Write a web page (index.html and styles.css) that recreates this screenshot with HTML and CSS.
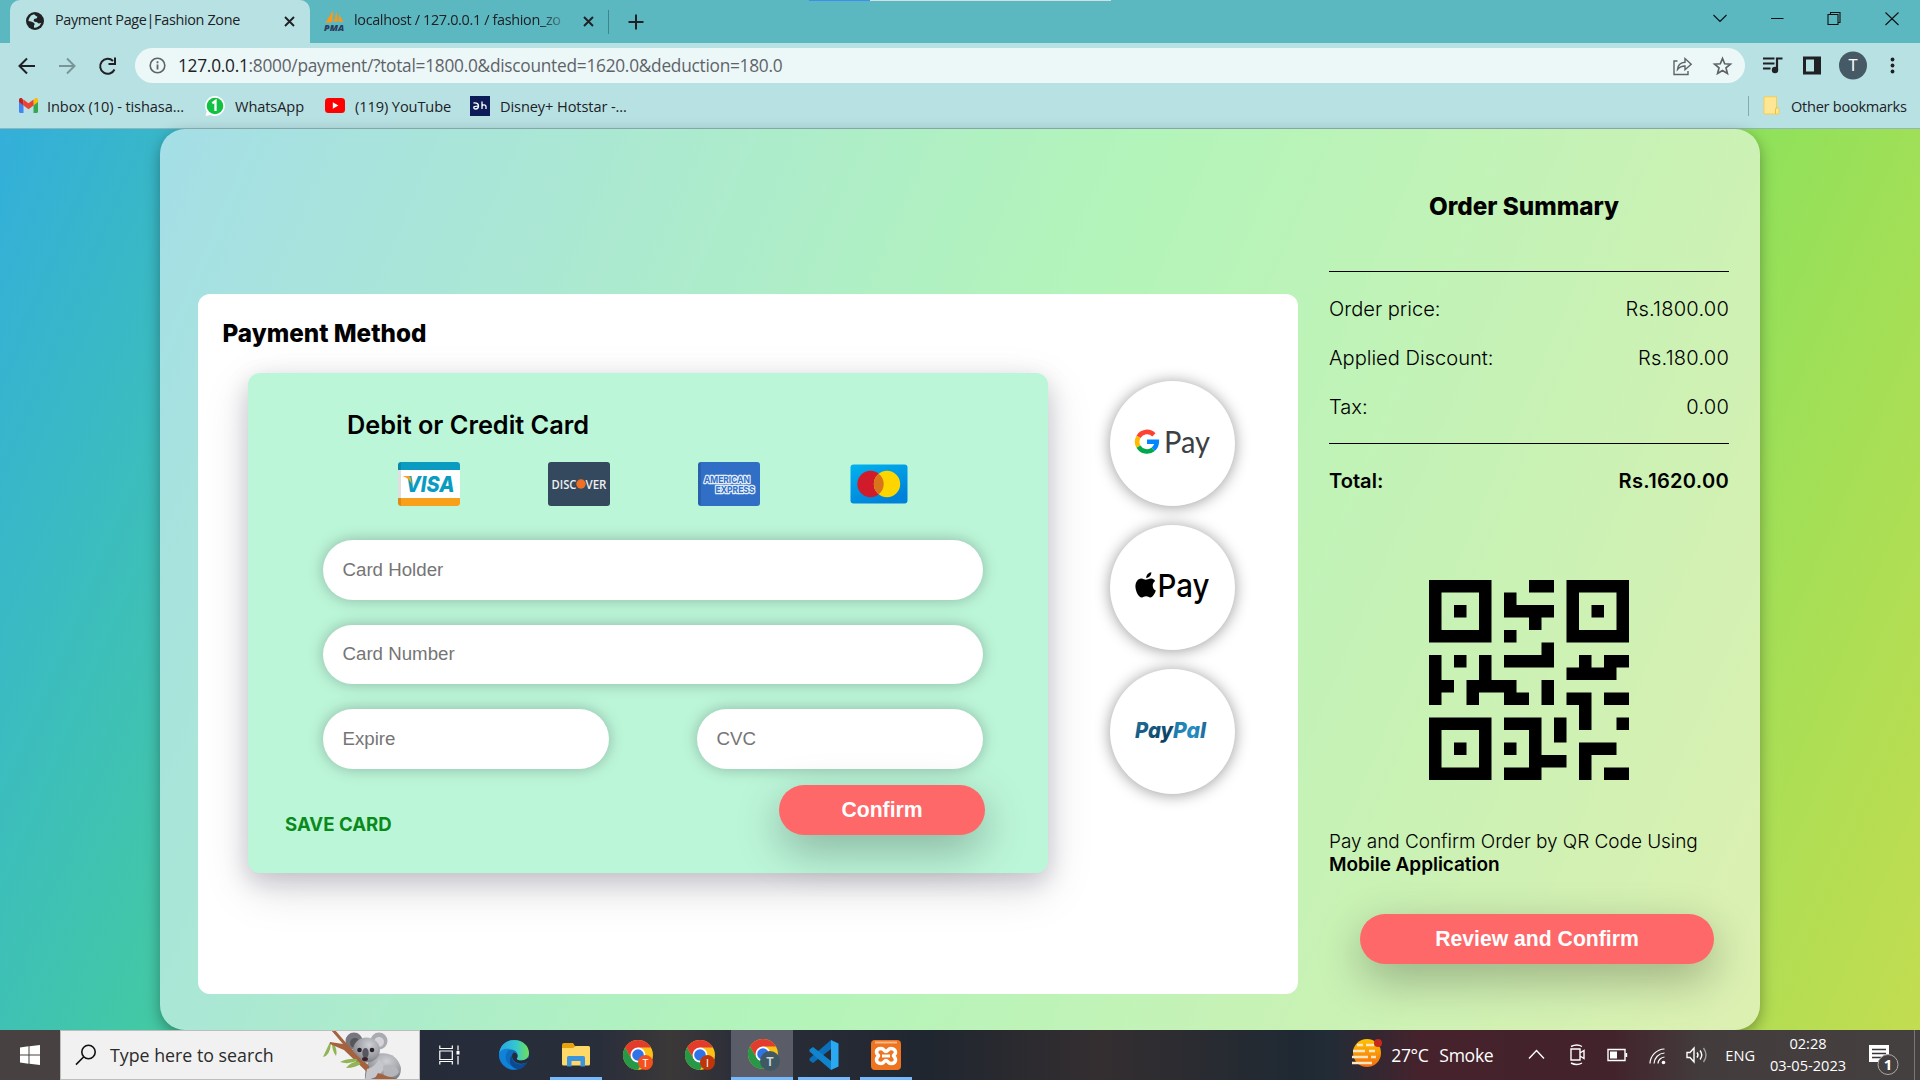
FILE: index.html
```html
<!DOCTYPE html>
<html lang="en">
<head>
<meta charset="utf-8">
<title>Payment Page|Fashion Zone</title>
<link rel="stylesheet" href="styles.css">
</head>
<body>
<header class="browser">
  <div class="tabstrip">
    <div class="tab tab-active">
      <svg class="tab-icon" width="18" height="18" viewBox="0 0 18 18"><circle cx="9" cy="9" r="9" fill="#202124"/><path d="M8 2.2 5 3.6 3 6.5 2.4 9 5 9.5 7.5 10.500 8.800 12 8 13.500 8 15.700 10.500 15.600 13.500 13.800 15.300 11 12.500 11.500 11 10.300 8.500 9.800 7.500 8.300 8.500 6.800 10.500 6.500 11.500 4.800 10 4z" fill="#b8e1e4"/></svg>
      <span class="tab-title">Payment Page|Fashion Zone</span>
      <svg class="tab-close" width="11" height="11" viewBox="0 0 11 11"><path d="M1 1l9 9M10 1l-9 9" stroke="#202124" stroke-width="1.900"/></svg>
    </div>
    <div class="tab tab-idle">
      <svg class="tab-icon" width="20" height="22" viewBox="0 0 20 22"><path d="M9 0 1.500 13 8.500 12zM12.500 1 10 12l4-.8zM15 4l-.5 7.500 5 .8z" fill="#f79a1c"/><text x="0" y="21" class="pma" textLength="20" lengthAdjust="spacingAndGlyphs">PMA</text></svg>
      <span class="tab-title tab-title-faded">localhost / 127.0.0.1 / fashion_zo</span>
      <svg class="tab-close" width="11" height="11" viewBox="0 0 11 11"><path d="M1 1l9 9M10 1l-9 9" stroke="#202124" stroke-width="1.900"/></svg>
    </div>
    <span class="tab-divider"></span>
    <svg class="tab-plus" width="16" height="16" viewBox="0 0 16 16"><path d="M8 .5v15M.5 8h15" stroke="#202124" stroke-width="2"/></svg>
    <div class="share-strip"><i></i><b></b></div>
    <svg class="window-controls" width="200" height="40" viewBox="0 0 200 40" fill="none" stroke="#111" stroke-width="1.100"><path d="M6.500 13l6.500 6.500 6.500-6.500M64 16.500h12.500M121 12.500h10v10h-10zM123.500 12.500v-2h9.500v10h-2M178.500 10.500l13 12.500M191.500 10.500l-13 12.500"/></svg>
  </div>
  <div class="toolbar">
    <svg class="nav" width="110" height="36" viewBox="0 0 110 36" fill="none" stroke="#202124" stroke-width="2"><path d="M28 18H13M20 10.500 12.500 18l7.500 7.500"/><path stroke="#7a9597" d="M52 18h15M60 10.500l7.500 7.500-7.500 7.500"/><path d="M107.500 21.500a7.500 7.500 0 1 1-1.500-8.500M108 9.500v6.500h-6.500"/></svg>
    <div class="omnibox">
      <svg width="17" height="17" viewBox="0 0 17 17" fill="none" stroke="#5f6368"><circle cx="8.500" cy="8.500" r="7.300" stroke-width="1.600"/><path d="M8.500 7.500v5M8.500 4.300v2" stroke-width="1.800"/></svg>
      <span class="url"><em>127.0.0.1</em>:8000/payment/?total=1800.0&amp;discounted=1620.0&amp;deduction=180.0</span>
      <svg class="omni-actions" width="62" height="22" viewBox="0 0 62 22" fill="none" stroke="#5f6368" stroke-width="1.400"><path d="M5.500 6H2v13.500h14V16M5.500 14.500c.5-5 3.500-7 7.500-7.200V3.500l6.200 5.700-6.200 5.500v-3.700c-3.500 0-5.500 1-7.500 3.500z"/><path stroke-width="1.700" d="M50.500 3.500l2.200 5.300 5.700.4-4.400 3.700 1.400 5.600-4.900-3-4.900 3 1.400-5.600-4.400-3.700 5.700-.4z"/></svg>
    </div>
    <svg class="extensions" width="150" height="36" viewBox="0 0 150 36"><path d="M1 10.500h11.500M1 15.500h11.500M1 20.500h7.500" stroke="#202124" stroke-width="2"/><path d="M15 22V10.500h5.500" fill="none" stroke="#202124" stroke-width="2.200"/><circle cx="13" cy="22" r="3.200" fill="#202124"/><path d="M41 8.500h18v18H41zM44 11.500v12h8v-12z" fill="#202124" fill-rule="evenodd"/><circle cx="91" cy="17.500" r="14" fill="#455a64"/><text x="91" y="23" text-anchor="middle" class="avatar">T</text><g fill="#202124"><circle cx="130.500" cy="11.500" r="1.900"/><circle cx="130.500" cy="17.500" r="1.900"/><circle cx="130.500" cy="23.500" r="1.900"/></g></svg>
  </div>
  <div class="bookmarks">
    <svg class="bm-mail" width="19" height="15" viewBox="0 0 19 15"><path d="M0 2v11.500Q0 15 1.500 15h3V5z" fill="#4285f4"/><path d="M19 2v11.500q0 1.500-1.500 1.500h-3V5z" fill="#34a853"/><path d="M14.500 2.500V7.500L19 4V2c0-2-2-2.500-3.200-1.500z" fill="#fbbc04"/><path d="M4.500 2.500V7.500L0 4V2C0 0 2-.5 3.200.5z" fill="#c5221f"/><path d="M4.500 1.500v6l5 3.800 5-3.800v-6l-5 3.800z" fill="#ea4335"/></svg>
    <span class="bm-text">Inbox (10) - tishasa...</span>
    <svg class="bm-wa" width="20" height="20" viewBox="0 0 20 20"><path d="M10 0a10 10 0 1 1-4.500 19L.5 20l1.200-4.500A10 10 0 0 1 10 0z" fill="#fff"/><circle cx="10" cy="10" r="8.300" fill="#12c143"/><path d="M7.300 7.200 10.500 5v10" fill="none" stroke="#fff" stroke-width="2.300"/></svg>
    <span class="bm-text">WhatsApp</span>
    <svg class="bm-yt" width="20" height="15" viewBox="0 0 20 15"><rect width="20" height="15" rx="3.500" fill="#f00"/><path d="M7.800 4.200v6.600l5.600-3.300z" fill="#fff"/></svg>
    <span class="bm-text">(119) YouTube</span>
    <svg class="bm-hs" width="20" height="20" viewBox="0 0 20 20"><rect width="20" height="20" fill="#0d1b57"/><path d="M3.500 7q5.500-.5 5 3.500-.5 2.500-2.700 2.500-2.300-.2-2-1.800.4-1.300 5-1M12 5.500V13M12 10.800q0-2 2-2t2 2V13" fill="none" stroke="#fff" stroke-width="1.300"/></svg>
    <span class="bm-text">Disney+ Hotstar -...</span>
    <span class="bm-divider"></span>
    <svg class="bm-folder" width="17" height="19" viewBox="0 0 17 19"><path d="M1 .8h12.500V12H16v6H1z" fill="#ffe694" stroke="#f2cf50"/><path d="M12.500 18v-4.500q0-2 1.700-2" fill="none" stroke="#eebf38"/></svg>
    <span class="bm-text">Other bookmarks</span>
  </div>
</header>

<main class="page">
  <div class="checkout">
    <section class="panel">
      <h2 class="panel-title">Payment Method</h2>
      <div class="methods">
        <form class="card">
          <h3 class="card-title">Debit or Credit Card</h3>
          <div class="brands">
            <svg width="62" height="44" viewBox="0 0 62 44"><rect width="62" height="44" rx="3" fill="#fff"/><path d="M0 8V3q0-3 3-3h56q3 0 3 3v5z" fill="#0a9cc0"/><path d="M0 36h62v5q0 3-3 3H3q-3 0-3-3z" fill="#f9a01b"/><path d="M0 3q0-3 3-3v44q-3 0-3-3z" fill="#000" opacity=".12"/><text x="7.500" y="30" class="visa" textLength="49" lengthAdjust="spacingAndGlyphs">VISA</text><path d="M4.500 14h6q2 0 2.300 2l1 6Q11 16 4.500 14z" fill="#f9a01b"/></svg>
            <svg width="62" height="44" viewBox="0 0 62 44"><rect width="62" height="44" rx="3" fill="#34495e"/><text x="3.500" y="26.700" class="disc" textLength="25" lengthAdjust="spacingAndGlyphs">DISC</text><circle cx="33" cy="22" r="4.700" fill="#f26e21"/><text x="37.500" y="26.700" class="disc" textLength="21" lengthAdjust="spacingAndGlyphs">VER</text></svg>
            <svg width="62" height="44" viewBox="0 0 62 44"><rect width="62" height="44" rx="3" fill="#306fc5"/><path d="M0 3q0-3 3-3v44q-3 0-3-3z" fill="#000" opacity=".12"/><text x="6" y="20.500" class="amex" textLength="46" lengthAdjust="spacingAndGlyphs">AMERICAN</text><text x="17.500" y="31" class="amex" textLength="39" lengthAdjust="spacingAndGlyphs">EXPRESS</text></svg>
            <svg width="62" height="44" viewBox="0 0 62 44"><defs><linearGradient id="mc" x1="0" y1="0" x2=".5" y2="1"><stop offset="0" stop-color="#00b3ee"/><stop offset="1" stop-color="#0082da"/></linearGradient></defs><rect x="2.500" y="2.500" width="57" height="39" rx="3" fill="url(#mc)"/><circle cx="22.500" cy="22" r="13.200" fill="#d11a2a"/><circle cx="39" cy="22" r="13.200" fill="#ffd500"/><path d="M30.750 11.700a13.200 13.200 0 0 1 0 20.600 13.200 13.200 0 0 1 0-20.600z" fill="#d9741b"/></svg>
          </div>
          <div class="fields">
            <input class="field" type="text" placeholder="Card Holder">
            <input class="field" type="text" placeholder="Card Number">
            <div class="field-pair">
              <input class="field" type="text" placeholder="Expire">
              <input class="field" type="text" placeholder="CVC">
            </div>
          </div>
          <div class="card-actions">
            <span class="save">SAVE CARD</span>
            <button class="btn btn-card" type="button">Confirm</button>
          </div>
        </form>
        <div class="wallets">
          <div class="wallet"><svg width="77" height="36" viewBox="0 0 77 36"><g fill="none" stroke-width="4.600"><path d="M19.900 8.800A9.800 9.800 0 0 0 4.500 10.800" stroke="#ff4131"/><path d="M4.500 10.800a9.800 9.800 0 0 0 0 9.800" stroke="#ffba00"/><path d="M4.500 20.600a9.800 9.800 0 0 0 14.800 2.600" stroke="#00a94b"/><path d="M19.300 23.200a9.800 9.800 0 0 0 3.500-7.400H13" stroke="#0086ff"/></g><text x="30" y="26.500" class="gpay" textLength="46" lengthAdjust="spacingAndGlyphs">Pay</text></svg></div>
          <div class="wallet"><svg width="77" height="36" viewBox="0 0 77 36"><path transform="translate(0 -.9) scale(1 1.060)" d="M17.300 3c.3 2.600-2.300 5.500-5 5.300-.3-2.500 2.300-5.200 5-5.300zM21.200 11.200c-3.600 2.300-3.200 7.300.6 9-1 3-3 6.400-5.400 6.500-1.700 0-2.300-1-4.300-1s-2.700 1-4.300 1C4.800 26.800 2 21.500 1.500 17.500 1 12.500 3.700 9 7.300 8.800c1.800 0 3.300 1.200 4.600 1.200 1.200 0 3-1.300 5.300-1.200 1.500.1 3.100.9 4 2.400z"/><text x="23.500" y="27" class="apay" textLength="52" lengthAdjust="spacingAndGlyphs">Pay</text></svg></div>
          <div class="wallet"><svg width="77" height="36" viewBox="0 0 77 36"><defs><linearGradient id="pp1" x1="0" x2="1" y1="0" y2="1"><stop offset="0" stop-color="#2577a6"/><stop offset=".8" stop-color="#0b4262"/></linearGradient><linearGradient id="pp2"><stop offset="0" stop-color="#1c7aac"/><stop offset=".6" stop-color="#2790c3"/><stop offset="1" stop-color="#1a6696"/></linearGradient></defs><text x="1" y="23.500" class="ppal" fill="url(#pp1)" textLength="38" lengthAdjust="spacingAndGlyphs">Pay</text><text x="39" y="23.500" class="ppal" fill="url(#pp2)" textLength="33" lengthAdjust="spacingAndGlyphs">Pal</text></svg></div>
        </div>
      </div>
    </section>
    <aside class="summary">
      <h2 class="summary-title">Order Summary</h2>
      <dl class="lines">
        <div class="line"><dt>Order price:</dt><dd>Rs.1800.00</dd></div>
        <div class="line"><dt>Applied Discount:</dt><dd>Rs.180.00</dd></div>
        <div class="line"><dt>Tax:</dt><dd>0.00</dd></div>
      </dl>
      <div class="line total"><span>Total:</span><b>Rs.1620.00</b></div>
      <svg class="qr" width="200" height="200" viewBox="0 0 16 16"><path fill-rule="evenodd" d="M0 0h5v5H0zM1 1v3h3V1zM2 2h1v1H2zM11 0h5v5h-5zM12 1v3h3V1zM13 2h1v1h-1zM0 11h5v5H0zM1 12v3h3v-3zM2 13h1v1H2z"/><path d="M8 0h2v1H8zM6 1h1v1h3v1H9v1H8V3H6zM6 4h1v1H6zM9 5h1v2H6V6h3zM0 6h1v2h1v1H1v1H0zM2 6h1v1H2zM4 6h1v2h2v1h1v1H6V9H4v1H3V8h1zM9 8h1v2H9zM12 6h1v1h1V6h2v1h-1v1h-4V7h1zM11 9h2v3h-1v-2h-1zM14 9h2v1h-2zM15 11h1v1h-1zM6 11h3v3h2v1H9v1H6v-1h2v-3H6zM6 13h1v1H6zM10 11h1v2h-1zM12 13h3v1h-2v2h-1zM14 15h2v1h-2z"/></svg>
      <p class="note">Pay and Confirm Order by QR Code Using<br><strong>Mobile Application</strong></p>
      <button class="btn btn-review" type="button">Review and Confirm</button>
    </aside>
  </div>
</main>

<footer class="taskbar">
  <div class="start"><svg width="20" height="20" viewBox="0 0 20 20" fill="#fff"><path d="M0 2.500 8.500 1.300V9.500H0zM9.500 1.200 20 0v9.500H9.500zM0 10.500h8.500v8.200L0 17.500zM9.500 10.500H20V20L9.500 18.800z"/></svg></div>
  <div class="search">
    <svg class="lens" width="22" height="22" viewBox="0 0 22 22" fill="none" stroke="#111" stroke-width="1.600"><circle cx="13.500" cy="8" r="6.700"/><path d="M8.800 12.800 1 20.600"/></svg>
    <span>Type here to search</span>
    <svg class="koala" width="84" height="50" viewBox="0 0 84 50"><defs><radialGradient id="kf" cx=".6" cy=".3" r=".8"><stop offset="0" stop-color="#cfcfd6"/><stop offset=".6" stop-color="#9c9ca3"/><stop offset="1" stop-color="#6d6d75"/></radialGradient></defs>
      <path d="M54 24q20-4 25 14 0 10-7 12H43q-1-18 11-26z" fill="url(#kf)"/>
      <path d="M8 12 1 27q7-1 8-14zM10 13q0 8 4 13 2-7-3-13z" fill="#93b455"/>
      <circle cx="32" cy="11" r="8.500" fill="#77777f"/><circle cx="57" cy="11" r="8.500" fill="#aaaab1"/><circle cx="33" cy="13" r="5" fill="#55555c"/><circle cx="57" cy="12" r="5" fill="#d4d4da"/>
      <path d="M9 0h4l12 14 22 22v8L22 20 8 14v-2l13 2z" fill="#a5623f"/>
      <path d="M36 29q-10-1-18 3 9 3 19-2zM38 31q-10 1-14 7 10 0 16-5z" fill="#93b455"/>
      <ellipse cx="44.500" cy="20" rx="13.500" ry="12.500" fill="url(#kf)"/>
      <path d="M25 21q9 6 15 15l6 3q-9-14-19-20z" fill="#a5623f"/>
      <circle cx="37.500" cy="20" r="2.300" fill="#2c2029"/><circle cx="50" cy="20" r="2.300" fill="#2c2029"/><ellipse cx="43.500" cy="23" rx="3.200" ry="5" fill="#56565e"/><ellipse cx="43" cy="29" rx="3" ry="2" fill="#3d2025"/>
      <path d="M45 39q8-2 12-10l6 8q-5 11-19 13h-1z" fill="#c6c6cd"/><path d="M56 43l22 7H52z" fill="#a5623f"/><path d="M61 36q12-4 16 6-5 8-15 3z" fill="#b5b5bc"/></svg>
  </div>
  <div class="task taskview"><svg width="22" height="20" viewBox="0 0 22 20" fill="none" stroke="#fff" stroke-width="1.200"><path d="M.8.5v3h12.500v-3M.8 6h12.500v8.500H.8zM.8 19.500v-3h12.500v3M19 .5v5M19 11v8.500"/><path d="M17.500 6h3v3.500h-3z" fill="#fff" stroke="none"/></svg></div>
  <div class="task"><svg width="30" height="30" viewBox="0 0 30 30"><defs><linearGradient id="e1"><stop offset="0" stop-color="#2aa3e6"/><stop offset=".55" stop-color="#33c6ce"/><stop offset="1" stop-color="#71e05a"/></linearGradient></defs><circle cx="15" cy="15" r="15" fill="#0f6cbd"/><path d="M0 14C1 5 7 0 15 0c9 0 15 6 15 13 0 5-4 7.500-8 7.500-3 0-5-1-4-2.500 2-3 0-8-6-8.500C6 9 1 11 0 14z" fill="url(#e1)"/><path d="M0 14c1-4 6-6 11-5-4 3-6 8-3 13 3 4 8 7 12 6.500A15 15 0 0 1 0 14z" fill="#1083d8"/><path d="M12.500 15q0 7 6.500 9 5 1.500 9-2-2 5-6.500 7-7 1-10-5-1.500-5 1-9z" fill="#0b4a90"/><path d="M14.500 12.500c3.500 0 5 3.500 3.500 5.500-1 1.500 1 2.500 4 2.500 3 0 5-1 7.500-3l.5 2-2 2.700q-4 2.300-9 1-6-2.200-6-7.200 0-2 1.500-3.500z" fill="#252b38"/></svg></div>
  <div class="task open"><svg width="28" height="24" viewBox="0 0 28 24"><path d="M0 2Q0 0 2 0h9l2 3h13q2 0 2 2v3H0z" fill="#e8a20c"/><path d="M0 5h11l3-2h12q2 0 2 2v16q0 1.500-1.500 1.500h-25Q0 22.500 0 21z" fill="#ffd968"/><path d="M5 23V14.500Q5 13 6.500 13h15q1.500 0 1.500 1.500V23.500h-4.500V18h-9v5.500H5z" fill="#3b94dd"/></svg></div>
  <div class="task"><svg width="30" height="30" viewBox="0 0 30 30"><use href="#chrome"/><circle cx="22.500" cy="22.500" r="7.500" fill="#f4511e"/><text x="22.500" y="26.500" text-anchor="middle" class="badge">T</text></svg></div>
  <div class="task"><svg width="30" height="30" viewBox="0 0 30 30"><use href="#chrome"/><circle cx="22.500" cy="22.500" r="7.500" fill="#bf360c"/><text x="22.500" y="26.500" text-anchor="middle" class="badge">I</text></svg></div>
  <div class="task open active"><svg width="32" height="32" viewBox="0 0 32 32"><g id="chrome"><circle cx="15" cy="15" r="15" fill="#fbc116"/><path d="M2 7.500A15 15 0 0 1 28 7.500H15L8.500 18.700z" fill="#e33b2e"/><path d="M2 7.500A15 15 0 0 0 15 30l6.500-11.200H8.500z" fill="#279847"/><circle cx="15" cy="15" r="7.500" fill="#fff"/><circle cx="15" cy="15" r="5.800" fill="#2f73e8"/></g><circle cx="22" cy="22" r="10" fill="#3f5863"/><text x="22" y="26.500" text-anchor="middle" class="badge badge-big">T</text></svg></div>
  <div class="task open"><svg width="30" height="30" viewBox="0 0 30 30"><path d="M22 0v9L4 23l-3.500-2.500v-2z" fill="#0b70b8"/><path d="M22 30v-9L4 7 .5 9.500v2z" fill="#1085cd"/><path d="M22 0l7.500 3.500v23L22 30z" fill="#2aa9f2"/></svg></div>
  <div class="task open"><svg width="30" height="30" viewBox="0 0 30 30"><rect width="30" height="30" rx="4" fill="#ee7420"/><path d="M4 1.500h22v2H4z" fill="#f9c9a3" opacity=".8"/><path d="M10 8.500c3 0 3 3 5 3s2-3 5-3 4.500 2 4.500 4-2 2.500-2 3.200 2 1.500 2 3.800-1.500 4-4.500 4-3-3-5-3-2 3-5 3-4.500-2-4.500-4 2-3 2-3.800-2-1.500-2-3.500 1.500-3.700 4.500-3.700z" fill="#ee7420" stroke="#fff" stroke-width="3.600"/><path d="M11 16h8" stroke="#fff" stroke-width="3"/></svg></div>
  <div class="tray">
    <svg class="weather" width="31" height="30" viewBox="0 0 31 30"><defs><linearGradient id="sun" x1="0" y1="0" x2="0" y2="1"><stop offset="0" stop-color="#ffc400"/><stop offset="1" stop-color="#f26a11"/></linearGradient></defs><circle cx="16" cy="15" r="14" fill="url(#sun)"/><path d="M6 7h6M15 7h8M2 13h12M18 13h6M1 19h16M20 19h5M1 25h20" stroke="#ffe6c0" stroke-width="2.400"/><circle cx="27" cy="5" r="4" fill="#c42b1c"/></svg>
    <span class="temp">27°C</span><span class="sky">Smoke</span>
    <svg class="tray-icons" width="190" height="30" viewBox="0 0 190 30" fill="none" stroke="#fff" stroke-width="1.400"><path d="M4 18.500l7.500-8 7.500 8"/><path d="M46 9h9v11h-9zM55 13l4-2.500v8L55 16M46 6.500q6-3 11 0M46 23q6 3 11 0"/><path d="M83 9.500h17v11H83zM101.500 13v4"/><path fill="#fff" stroke="none" d="M85 11.500h7v7h-7z"/><path stroke-width="1.200" d="M125 23.500a15 15 0 0 1 14.500-14.500M129 23.500a11 11 0 0 1 10.500-10.500M133 23.500a7 7 0 0 1 6.500-6.500"/><circle cx="138.500" cy="22.500" r="1.800" fill="#fff" stroke="none"/><path d="M162 12.500h3l4-4.500v14l-4-4.500h-3zM172 12.500q2 2.500 0 5M175 10.500q3.500 4.500 0 9"/><path d="M178.500 8q5 7 0 14" opacity=".5"/></svg>
    <span class="lang">ENG</span>
    <div class="clock"><span>02:28</span><span>03-05-2023</span></div>
    <svg class="notify" width="32" height="34" viewBox="0 0 32 34"><path d="M1 1h20v17H5l-4 0z" fill="#fff"/><path d="M4 5.500h14M4 9.500h14M4 13.500h9" stroke="#3b3636" stroke-width="1.300"/><circle cx="20" cy="20.500" r="10" fill="#454040" stroke="#aaa"/><text x="20" y="26" text-anchor="middle" class="count">1</text></svg>
    <span class="peek"></span>
  </div>
</footer>
</body>
</html>
```
FILE: styles.css
```css
* { box-sizing: border-box; }
body { margin: 0; width: 1920px; height: 1080px; overflow: hidden; font-family: "Inter", "Liberation Sans", sans-serif; color: #000; }
svg { flex: none; display: block; overflow: visible; }
h2, h3, dl, dd, p { margin: 0; }

/* Browser chrome */
.browser { height: 129px; background: #b8e1e4; border-bottom: 1px solid #93b5b9; font-family: "Open Sans", "Noto Sans", sans-serif; color: #202124; white-space: nowrap; }
.tabstrip { height: 43px; background: #5bb7c0; display: flex; align-items: center; padding-left: 10px; }
.tab { height: 43px; display: flex; align-items: center; padding-left: 16px; padding-bottom: 1px; }
.tab-active { width: 300px; background: #b8e1e4; border-radius: 10px 10px 0 0; }
.tab-idle { width: 298px; padding-left: 14px; }
.tab-title { font-size: 14.400px; letter-spacing: -.33px; line-height: 24px; padding-bottom: 2px; margin-left: 11px; width: 224px; }
.tab-title-faded { margin-left: 10px; width: 218px; -webkit-mask-image: linear-gradient(90deg, #000 85%, transparent); mask-image: linear-gradient(90deg, #000 85%, transparent); }
.tab-close { margin-left: 5px; }
.tab-idle .tab-close { margin-left: 11px; }
.pma { font: italic 800 9px "Open Sans", sans-serif; fill: #2c3b5e; }
.tab-divider { width: 1px; height: 24px; background: #41848b; }
.tab-plus { margin-left: 19px; }
.share-strip { display: flex; align-self: flex-start; width: 302px; height: 1px; margin-left: 165px; }
.share-strip i { width: 61px; background: #3d8ef0; }
.share-strip b { flex: 1; background: #cfdfe2; }
.window-controls { margin-left: 596px; }
.toolbar { height: 45px; display: flex; align-items: center; padding-left: 7px; }
.omnibox { width: 1610px; height: 35px; margin-left: 18px; border-radius: 18px; background: #ecf7f8; display: flex; align-items: center; padding-left: 14px; }
.url { font-size: 17.300px; letter-spacing: -.26px; margin-left: 12px; padding-bottom: 1px; color: #5f6368; }
.url em { font-style: normal; color: #202124; }
.omni-actions { margin-left: auto; margin-right: 11px; }
.extensions { margin-left: 17px; }
.avatar { font: 16px "Roboto", sans-serif; fill: #fff; }
.bookmarks { height: 40px; display: flex; align-items: center; padding: 0 0 5px 19px; font-size: 14.600px; letter-spacing: -.1px; }
.bm-mail + .bm-text { margin-left: 9px; width: 138px; }
.bm-wa { margin-left: 20px; }
.bm-wa + .bm-text { margin-left: 10px; width: 69px; }
.bm-yt { margin-left: 21px; }
.bm-yt + .bm-text { margin-left: 10px; width: 95px; }
.bm-hs { margin-left: 20px; }
.bm-hs + .bm-text { margin-left: 10px; }
.bm-divider { width: 1px; height: 20px; margin-left: auto; background: #8aa9ac; }
.bm-folder { margin: 0 11px 0 14px; }
.bm-text:last-child { width: 116px; margin-right: 13px; letter-spacing: -.28px; }

/* Page */
.page { height: 901px; background: linear-gradient(113deg, #33afda 0%, #56e766 50%, #c3dc50 100%); }
.checkout { width: 1600px; height: 901px; margin: 0 auto; display: flex; padding-left: 38px; background: rgba(255, 255, 255, .55); border-radius: 25px; box-shadow: 0 5px 15px rgba(0, 0, 0, .35); }
.panel { width: 1100px; height: 700px; margin-top: 165px; background: #fff; border-radius: 12px; }
.panel-title { height: 79px; padding: 25px 0 0 24.500px; font-size: 24.250px; line-height: 30px; font-weight: 800; }
.methods { display: flex; align-items: flex-start; }
.card { width: 800px; height: 500px; margin-left: 50px; background: #bcf6d9; border-radius: 12px; box-shadow: rgba(17, 12, 40, .18) 0 8px 24px, rgba(17, 12, 40, .13) 0 16px 48px; }
.card-title { height: 89px; padding: 37px 0 0 99px; font-size: 25.300px; line-height: 30px; font-weight: 600; }
.brands { display: flex; gap: 88px; margin-left: 150px; }
.fields { display: grid; gap: 25px; width: 660px; margin: 34px 0 0 75px; }
.field-pair { display: flex; justify-content: space-between; }
.field { width: 100%; height: 59.500px; border: 0; border-radius: 30px; padding: 0 19.500px; background: #fff; font: 18.700px "Liberation Sans", Arial, sans-serif; box-shadow: 0 0 15px rgba(0, 0, 0, .25); }
.field::placeholder { color: #757575; }
.field-pair .field { width: 286px; }
.card-actions { display: flex; justify-content: space-between; margin: 16px 63px 0 37px; }
.save { padding-top: 27px; color: #0a8a1c; font-size: 18.600px; line-height: 24px; font-weight: 700; }
.btn { height: 50px; border: 0; padding: 0; border-radius: 25px; background: #ff6868; color: #fff; font: bold 21.200px "Liberation Sans", Arial, sans-serif; box-shadow: 0 15px 45px rgba(0, 0, 0, .28); }
.btn-card { width: 206px; }
.wallets { display: grid; gap: 19px; margin: 8px 0 0 62px; }
.wallet { width: 125px; height: 125px; border-radius: 50%; background: #fff; box-shadow: 0 1px 15px rgba(0, 0, 0, .4); display: grid; place-items: center; }
.visa { font: italic 800 22px "Inter", sans-serif; fill: #0a9cc0; }
.disc { font: 600 13px "Open Sans", sans-serif; fill: #eee; }
.amex { font: 700 9.500px "Inter", sans-serif; fill: #306fc5; stroke: #e3edfb; stroke-width: 2.600px; stroke-linejoin: round; paint-order: stroke; }
.gpay { font: 400 31px "Lato", sans-serif; fill: #3c4043; }
.apay { font: 500 31.800px "Inter", sans-serif; }
.ppal { font: italic 800 22px "Inter", sans-serif; }

.summary { width: 400px; margin-left: 31px; display: flex; flex-direction: column; }
.summary-title { height: 142px; padding: 63px 10px 0 0; text-align: center; font-size: 24.250px; line-height: 30px; font-weight: 800; }
.lines { height: 173px; border: solid #000; border-width: 1px 0; padding-top: 25px; display: grid; grid-auto-rows: 24px; gap: 25px; }
.line { display: flex; justify-content: space-between; font-size: 20.100px; line-height: 24px; font-weight: 300; }
.line dd { letter-spacing: .2px; }
.total { margin-top: 25px; font-weight: 600; }
.total b { font-weight: 600; letter-spacing: .27px; }
.qr { margin: 87px 0 0 100px; }
.note { margin-top: 50px; font-size: 19px; letter-spacing: -.05px; line-height: 23px; font-weight: 300; white-space: nowrap; }
.note strong { font-weight: 600; }
.btn-review { width: 354px; margin: 38px 0 0 31px; flex: none; }

/* Taskbar */
.taskbar { height: 50px; display: flex; color: #fff; font-family: "Open Sans", "Noto Sans", sans-serif; white-space: nowrap; background: linear-gradient(90deg, #474241 60px, #262b39 420px, #292e3b 600px, #3b3838 670px, #2b2e39 740px, #20262f 930px, #342e30 1100px, #1f2933 1300px, #222c36 1330px, #46222c 1420px, #42222b 1610px, #433c3c 1700px, #454040); }
.start { width: 60px; display: grid; place-items: center; }
.search { width: 360px; border: 1px solid #bdbdbd; background: #f1f1f1; display: flex; align-items: center; overflow: hidden; font-size: 17.800px; color: #2b2b2b; padding-left: 14px; }
.lens { margin-right: 13px; }
.koala { margin-left: auto; margin-right: 13px; }
.task { width: 62px; display: grid; place-items: center; }
.taskview { width: 63px; padding-right: 4px; }
.open { box-shadow: inset 0 -3px #76b9ff; margin: 0 5px; width: 52px; }
.active { margin: 0; width: 62px; padding-left: 3px; background: #5a5d68; }
.badge { font: 10.500px "Roboto", sans-serif; fill: #fff; }
.badge-big { font-size: 12px; font-weight: 700; fill: #ccd5d9; }
.tray { flex: 1; display: flex; align-items: center; justify-content: flex-end; font-size: 17.600px; }
.weather { margin-top: -4px; }
.temp { margin-left: 9px; width: 37px; letter-spacing: -.4px; }
.sky { margin-left: 11px; width: 54px; letter-spacing: -.3px; }
.tray-icons { margin: 0 10px 0 32px; }
.lang { font-size: 14.600px; }
.clock { width: 76px; margin-left: 15px; display: flex; flex-direction: column; align-items: center; font-size: 14.600px; line-height: 22px; padding-bottom: 2px; }
.notify { margin: 12px 0 0 22px; }
.count { font: 700 15px "Open Sans", sans-serif; fill: #fff; }
.peek { width: 1px; align-self: stretch; background: #777; margin: 0 5px 0 14px; }
```
